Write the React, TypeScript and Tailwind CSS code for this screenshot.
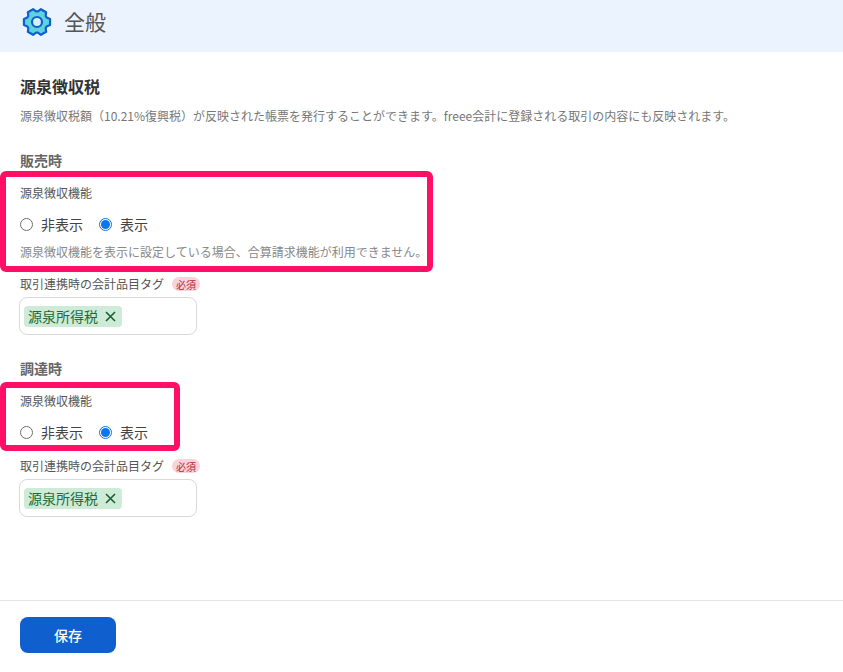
// six stubby lobes, pointing left and right like the reference
const gearPoints = [0, 60, 120, 180, 240, 300]
  .flatMap((deg) =>
    [
      [deg - 25, 10.6],
      [deg - 13, 13.4],
      [deg + 13, 13.4],
      [deg + 25, 10.6],
    ].map(([a, r]) => {
      const rad = (a * Math.PI) / 180
      return `${(15 + r * Math.cos(rad)).toFixed(2)},${(15 + r * Math.sin(rad)).toFixed(2)}`
    }),
  )
  .join(' ')

const Gear = () => (
  <svg width="30" height="30" viewBox="0 0 30 30" className="shrink-0">
    <polygon points={gearPoints} fill="#5fd3dc" stroke="#0f5fcf" strokeWidth="2.2" strokeLinejoin="round" />
    <circle cx="15" cy="15" r="5" fill="#d6f1f5" stroke="#0f5fcf" strokeWidth="2.2" />
  </svg>
)

const Radio = ({ checked, label }: { checked?: boolean; label: string }) => (
  <label className="flex items-center gap-2">
    <span
      className={
        checked
          ? 'flex h-[13px] w-[13px] items-center justify-center rounded-full border border-[#0a76f0] bg-white'
          : 'flex h-[13px] w-[13px] items-center justify-center rounded-full border border-[#6f6f6f] bg-white'
      }>
      {checked && <span className="h-[9px] w-[9px] rounded-full bg-[#0a76f0]" />}
    </span>
    <span className="text-[14px] leading-5 text-[#444]">{label}</span>
  </label>
)

const TagField = () => (
  <div className="mt-[3px] -ml-px flex h-[38px] w-[178px] items-center rounded-lg border border-[#d9d9d9] bg-white px-1">
    <span className="flex h-[21px] w-[98px] items-center gap-[7px] rounded bg-[#cdebd6] pl-1 text-[14px] text-[#1e6b3c]">
      源泉所得税
      <svg width="11" height="11" viewBox="0 0 11 11" fill="none" stroke="#1b5e36" strokeWidth="1.6">
        <path d="M1 1l9 9M10 1l-9 9" />
      </svg>
    </span>
  </div>
)

const TagLabel = () => (
  <div className="flex h-5 items-center gap-2">
    <span className="text-[12px] text-[#555]">取引連携時の会計品目タグ</span>
    <span className="flex h-[14px] w-7 items-center justify-center rounded-full bg-[#f9d3d9] text-[10px] text-[#b3283f]">
      必須
    </span>
  </div>
)

export default function App() {
  return (
    <div
      className="flex h-[672px] w-[843px] flex-col overflow-hidden bg-white"
      style={{ fontFamily: '"Noto Sans CJK JP", "Noto Sans", sans-serif' }}>
      <header className="flex h-[52px] items-center gap-[12px] bg-[#ebf3fe] pb-[8px] pl-[22px]">
        <Gear />
        <h1 className="-mt-[3px] text-[21px] leading-7 text-[#555]">全般</h1>
      </header>

      <main className="flex-1 px-5 pt-[24px]">
        <h2 className="text-[16px] leading-5 font-bold text-[#333]">源泉徴収税</h2>
        <p className="mt-[12px] text-[12px] leading-4 text-[#777]">
          源泉徴収税額（10.21%復興税）が反映された帳票を発行することができます。freee会計に登録される取引の内容にも反映されます。
        </p>

        <h3 className="mt-[26px] text-[14px] leading-5 font-bold text-[#666]">販売時</h3>
        <section className="relative mt-[13px]">
          <p className="text-[12px] leading-5 text-[#555]">源泉徴収機能</p>
          <div className="mt-[11px] flex gap-4">
            <Radio label="非表示" />
            <Radio checked label="表示" />
          </div>
          <p className="mt-[10px] text-[12px] leading-4 text-[#888]">
            源泉徴収機能を表示に設定している場合、合算請求機能が利用できません。
          </p>
          <div className="absolute -top-[12px] -left-5 h-[101px] w-[433px] rounded-md border-[6px] border-[#ff0f66]" />
        </section>

        <div className="mt-[14px]">
          <TagLabel />
          <TagField />
        </div>

        <h3 className="mt-[23px] text-[14px] leading-5 font-bold text-[#666]">調達時</h3>
        <section className="relative mt-[13px]">
          <p className="text-[12px] leading-5 text-[#555]">源泉徴収機能</p>
          <div className="mt-[11px] flex gap-4">
            <Radio label="非表示" />
            <Radio checked label="表示" />
          </div>
          <div className="absolute -top-[9px] -left-5 h-[69px] w-[180px] rounded-md border-[6px] border-[#ff0f66]" />
        </section>

        <div className="mt-[14px]">
          <TagLabel />
          <TagField />
        </div>
      </main>

      <footer className="h-[72px] border-t border-[#e5e5e5] pt-4 pl-5">
        <button className="h-9 w-24 rounded-lg bg-[#0f5fcf] text-[14px] font-medium text-white">保存</button>
      </footer>
    </div>
  )
}
